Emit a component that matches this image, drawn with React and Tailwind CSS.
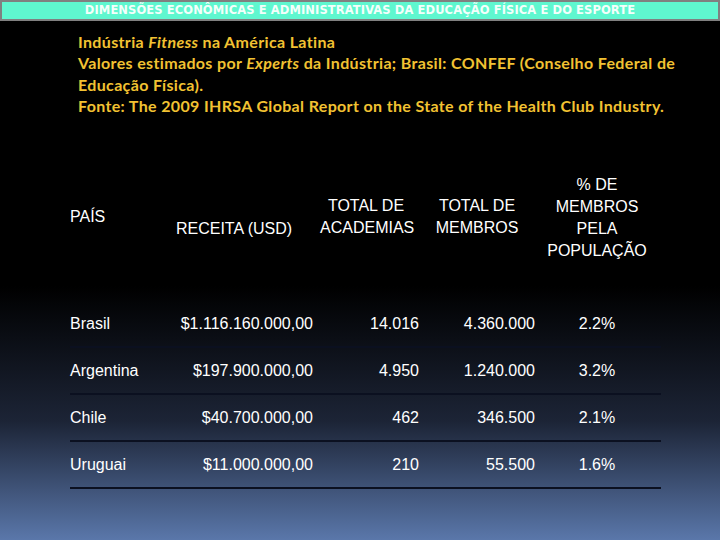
const rows = [
  { pais: 'Brasil', receita: '$1.116.160.000,00', academias: '14.016', membros: '4.360.000', pct: '2.2%' },
  { pais: 'Argentina', receita: '$197.900.000,00', academias: '4.950', membros: '1.240.000', pct: '3.2%' },
  { pais: 'Chile', receita: '$40.700.000,00', academias: '462', membros: '346.500', pct: '2.1%' },
  { pais: 'Uruguai', receita: '$11.000.000,00', academias: '210', membros: '55.500', pct: '1.6%' },
]

const cols = 'grid grid-cols-[90px_160px_105px_115px_121px]'

export default function App() {
  return (
    <div className="w-[720px] h-[540px] overflow-hidden bg-[linear-gradient(to_bottom,#000_0%,#000_53%,#1c2436_78%,#5a77aa_100%)] font-['Liberation_Sans',Arial,sans-serif] text-white">
      <div className="h-[21px] border-2 border-[#808080] bg-[#5ff7cf] flex items-center justify-center">
        <span className="font-['DejaVu_Sans',sans-serif] font-semibold text-[11.5px] leading-none tracking-[0.1px] text-[#f4fffb]">
          DIMENSÕES ECONÔMICAS E ADMINISTRATIVAS DA EDUCAÇÃO FÍSICA E DO ESPORTE
        </span>
      </div>

      <div className="mt-[10px] pl-[78px] font-['Lato',sans-serif] font-bold text-[16px] leading-[21.3px] tracking-[0.35px] text-[#f2c232]">
        <p>Indústria <i>Fitness</i> na América Latina</p>
        <p>
          Valores estimados por <i>Experts</i> da Indústria; Brasil: CONFEF (Conselho Federal de
          <br />
          Educação Física).
        </p>
        <p>Fonte: The 2009 IHRSA Global Report on the State of the Health Club Industry.</p>
      </div>

      <div className="mt-[58px] ml-[70px] w-[591px] text-[16px] leading-[22px]">
        <div className={`${cols} h-[127px] items-start`}>
          <div className="mt-[32px]">PAÍS</div>
          <div className="mt-[44px] text-center pr-[12px]">RECEITA (USD)</div>
          <div className="mt-[21px] text-center pr-[13px]">TOTAL DE<br />ACADEMIAS</div>
          <div className="mt-[21px] text-center pr-[11px]">TOTAL DE<br />MEMBROS</div>
          <div className="text-center pr-[7px]">% DE<br />MEMBROS<br />PELA<br />POPULAÇÃO</div>
        </div>
        {rows.map((r) => (
          <div key={r.pais} className={`${cols} h-[47px] items-center border-b-2 border-[#0b1020]`}>
            <div>{r.pais}</div>
            <div className="text-right pr-[7px]">{r.receita}</div>
            <div className="text-right pr-[6px]">{r.academias}</div>
            <div className="text-right pr-[5px]">{r.membros}</div>
            <div className="text-center pr-[7px]">{r.pct}</div>
          </div>
        ))}
      </div>
    </div>
  )
}
